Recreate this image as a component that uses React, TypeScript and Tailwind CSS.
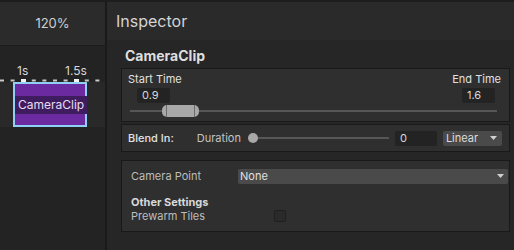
import React from "react";

function Ruler() {
  return (
    <div className="relative h-[36px]">
      <span className="absolute left-[17px] top-[18px] text-[12px] leading-[14px] text-[#d8d8d8]">1s</span>
      <span className="absolute left-[65px] top-[18px] text-[12px] leading-[14px] text-[#d8d8d8]">1.5s</span>
      <svg className="absolute left-0 top-[33px]" width="105" height="3" viewBox="0 0 105 3">
        <line x1="0" y1="1.5" x2="105" y2="1.5" stroke="#c8c8c8" strokeWidth="2" strokeDasharray="4 6.6" />
        <rect x="21" y="0" width="5" height="3" fill="#f2f2f2" />
        <rect x="74" y="0" width="5" height="3" fill="#f2f2f2" />
      </svg>
    </div>
  );
}

function Clip() {
  return (
    <div className="h-[45px] bg-[#292929]">
      <div className="ml-[13px] w-[74px] h-[45px] border-2 border-[#8fd0f5] bg-[#6b2a9f] flex">
        <div className="w-[9px] bg-[#7a3aac]" />
        <div className="flex-1 flex items-center justify-center">
          <div className="bg-[#3f1c60] px-[3px] h-[18px] flex items-center text-[12px] text-[#e6ddf0]">
            CameraClip
          </div>
        </div>
        <div className="w-[8px] bg-[#7d48ad]" />
      </div>
    </div>
  );
}

function NumberBox({ value, width }: { value: string; width: string }) {
  return (
    <div className={`${width} h-[15px] bg-[#232323] rounded-[2px] pl-[5px] text-[11px] leading-[15px] text-[#d8d8d8]`}>
      {value}
    </div>
  );
}

export default function App() {
  return (
    <div
      className="w-[514px] h-[250px] flex bg-[#1b1b1b] border-t-2 border-[#1d1d1d] overflow-hidden"
      style={{ fontFamily: "Inter, 'Noto Sans', sans-serif" }}
    >
      {/* timeline */}
      <div className="w-[105px] flex flex-col bg-[#232323]">
        <div className="h-[44px] bg-[#2b2b2b] border-b border-[#1c1c1c] flex items-center justify-center text-[13px] text-[#cfcfcf]">
          120%
        </div>
        <Ruler />
        <Clip />
      </div>
      <div className="w-[2px] bg-[#1a1a1a]" />

      {/* inspector */}
      <div className="flex-1 flex flex-col bg-[#262626]">
        <div className="h-[38px] bg-[#2a2a2a] pl-[9px] flex items-center text-[16px] text-[#d4d4d4]">
          Inspector
        </div>
        <div className="pl-[14px] pr-[4px]">
          <div className="pt-[8px] pb-[4px] pl-[4px] text-[14px] leading-[16px] font-bold text-[#dedede]">
            CameraClip
          </div>

          <div className="h-[54px] border border-[#191919] bg-[#2f2f2f] flex flex-col">
            <div className="flex justify-between pl-[6px] pr-[8px] pt-[3px] text-[11px] leading-[14px] text-[#e0e0e0]">
              <span>Start Time</span>
              <span>End Time</span>
            </div>
            <div className="flex justify-between pl-[15px] pr-[14px] mt-[2px]">
              <NumberBox value="0.9" width="w-[33px]" />
              <NumberBox value="1.6" width="w-[33px]" />
            </div>
            <div className="relative ml-[8px] mr-[12px] mt-[2px] h-[12px] flex items-center">
              <div className="w-full h-[2px] bg-[#575757]" />
              <div className="absolute left-[32px] top-0 w-[37px] h-[12px] rounded-[5px] bg-[#a8a8a8] flex justify-between px-[4px]">
                <div className="w-px h-full bg-[#6c6c6c]" />
                <div className="w-px h-full bg-[#6c6c6c]" />
              </div>
            </div>
          </div>

          <div className="mt-[2px] h-[28px] border border-[#191919] bg-[#2f2f2f] flex items-center text-[11px] text-[#d6d6d6]">
            <span className="ml-[6px] font-medium text-[#e2e2e2]">Blend In:</span>
            <span className="ml-[23px] text-[#c4c4c4]">Duration</span>
            <div className="ml-[7px] w-[141px] h-[10px] relative flex items-center">
              <div className="w-full h-[2px] bg-[#575757]" />
              <div className="absolute left-0 top-0 w-[10px] h-[10px] rounded-full bg-[#a8a8a8]" />
            </div>
            <div className="ml-[6px]">
              <NumberBox value="0" width="w-[42px]" />
            </div>
            <div className="ml-[6px] w-[59px] h-[15px] rounded-[2px] bg-[#4a4a4a] flex items-center justify-between pl-[3px] pr-[5px] text-[11px] text-[#dcdcdc]">
              <span>Linear</span>
              <svg width="7" height="4" viewBox="0 0 7 4">
                <polygon points="0,0 7,0 3.5,4" fill="#d0d0d0" />
              </svg>
            </div>
          </div>

          <div className="mt-[8px] h-[72px] border border-[#191919] bg-[#2f2f2f] flex flex-col pl-[9px] text-[11px]">
            <div className="mt-[7px] flex items-center">
              <span className="w-[107px] text-[#bdbdbd]">Camera Point</span>
              <div className="flex-1 mr-px h-[15px] rounded-[2px] bg-[#4a4a4a] flex items-center justify-between pl-[2px] pr-[4px] text-[#e0e0e0]">
                <span>None</span>
                <svg width="7" height="4" viewBox="0 0 7 4">
                  <polygon points="0,0 7,0 3.5,4" fill="#d0d0d0" />
                </svg>
              </div>
            </div>
            <div className="mt-[10px] font-bold leading-[14px] text-[#d8d8d8]">Other Settings</div>
            <div className="flex items-center leading-[14px]">
              <span className="w-[143px] text-[#bdbdbd]">Prewarm Tiles</span>
              <div className="w-[12px] h-[12px] rounded-[2px] border border-[#1f1f1f] bg-[#2a2a2a]" />
            </div>
          </div>
        </div>
      </div>
    </div>
  );
}
